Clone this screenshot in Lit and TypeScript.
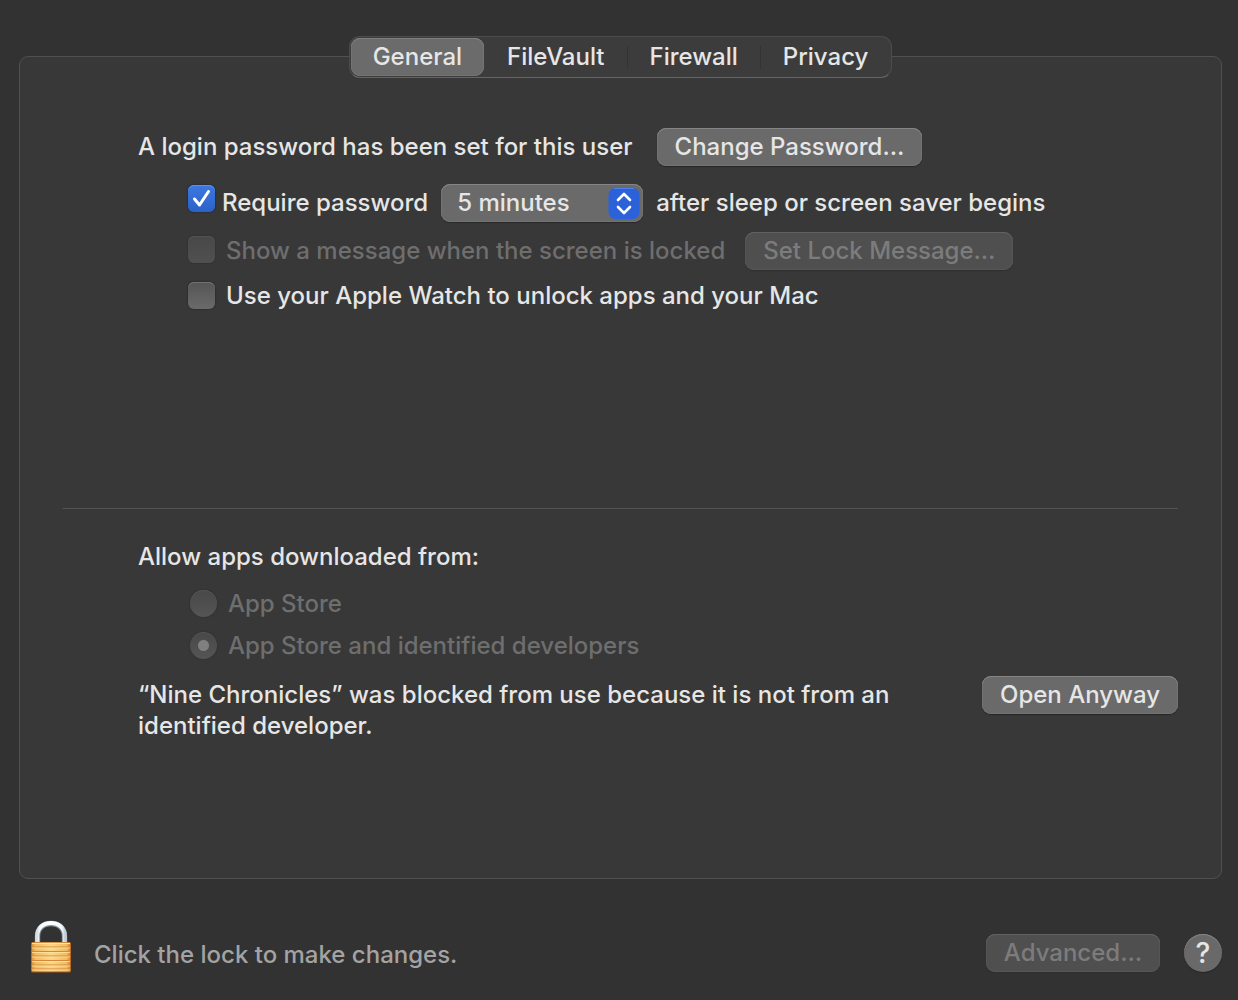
import { LitElement, html, css, svg } from "lit";
import { customElement, state } from "lit/decorators.js";
import { classMap } from "lit/directives/class-map.js";

const TABS = ["General", "FileVault", "Firewall", "Privacy"];

@customElement("app-root")
export class AppRoot extends LitElement {
  static styles = css`
    :host {
      display: block;
      font-family: Inter, "Liberation Sans", sans-serif;
      font-size: 24px;
      font-weight: 500;
      line-height: 31px;
      color: #e6e6e6;
      background: #323232;
    }
    * {
      box-sizing: border-box;
    }
    button,
    select {
      font: inherit;
      color: inherit;
      margin: 0;
    }
    .page {
      min-height: 100vh;
      display: flex;
      flex-direction: column;
      padding: 36px 16px 26px 19px;
    }
    .tabs {
      align-self: center;
      display: flex;
      align-items: center;
      height: 42px;
      margin-bottom: -22px;
      padding: 0 1px;
      z-index: 1;
      border: 1px solid #4c4c4c;
      border-bottom-color: #656565;
      border-radius: 11px;
      background: #3c3c3c;
    }
    .tab {
      height: 38px;
      padding: 0 22px 2px;
      border: 0;
      border-radius: 9px;
      background: none;
      display: flex;
      align-items: center;
    }
    .tab.selected {
      background: #6b6b6b;
      box-shadow: inset 0 1px 0 #7f7f7f, inset 0 0 0 1px #747474;
    }
    .rule {
      width: 1px;
      height: 23px;
      background: #333333;
    }
    .rule.clear {
      background: none;
    }
    .panel {
      flex: 1;
      border: 1px solid #505050;
      border-radius: 9px;
      background: #383838;
      padding: 71px 43px 0;
    }
    .login {
      min-height: 381px;
      padding-left: 75px;
      border-bottom: 1px solid #545454;
    }
    .row {
      display: flex;
      align-items: center;
      min-height: 38px;
    }
    .row.short {
      min-height: 31px;
    }
    .text,
    .row label {
      padding-bottom: 2px;
    }
    .password {
      gap: 24px;
      margin-bottom: 18px;
    }
    .options {
      display: flex;
      flex-direction: column;
      gap: 10px;
      padding-left: 50px;
    }
    .require {
      gap: 13px;
    }
    .message {
      gap: 20px;
    }
    .choice {
      display: flex;
      align-items: center;
      gap: 11px;
    }
    .tight {
      gap: 7px;
    }
    .off {
      color: #6e6e6e;
    }
    .mark {
      display: grid;
      width: 27px;
      height: 27px;
    }
    .mark.raised {
      margin-bottom: 10px;
    }
    .row .mark:not(.raised) {
      margin-bottom: 3px;
    }
    .mark > * {
      grid-area: 1 / 1;
      width: 100%;
      height: 100%;
      margin: 0;
    }
    .mark svg {
      pointer-events: none;
    }
    .box {
      appearance: none;
      border-radius: 6px;
      background: linear-gradient(#555555, #6a6a6a);
      box-shadow: inset 0 1px 0 #737373, 0 0 1px 1px #303030;
    }
    .box:checked {
      background: linear-gradient(#3b78e0, #2c62c8);
      box-shadow: inset 0 1px 0 #5a93ee, 0 0 1px 1px #2c3038;
    }
    .box:not(:checked) + svg {
      visibility: hidden;
    }
    .box:disabled {
      background: linear-gradient(#484848, #505050);
      box-shadow: inset 0 1px 0 #525252, 0 0 1px 1px #343434;
    }
    .dot {
      appearance: none;
      border-radius: 50%;
      background: linear-gradient(#484848, #555555);
      box-shadow: inset 0 1px 0 #555555, 0 0 1px 1px #343434;
    }
    .dot:checked {
      background: radial-gradient(circle, #808080 5px, transparent 6px),
        linear-gradient(#484848, #555555);
    }
    .push {
      height: 38px;
      padding: 0 18px 2px;
      border: 0;
      border-radius: 9px;
      background: #6a6a6a;
      box-shadow: inset 0 1px 0 #858585, inset 0 0 0 1px #737373,
        0 1px 1px #262626;
      display: flex;
      align-items: center;
      white-space: nowrap;
    }
    .push:disabled {
      color: #7c7c7c;
      background: #4f4f4f;
      box-shadow: inset 0 1px 0 #616161, inset 0 0 0 1px #565656,
        0 1px 1px #2f2f2f;
    }
    .popup {
      display: grid;
      width: 202px;
      height: 38px;
      align-items: center;
    }
    .popup > * {
      grid-area: 1 / 1;
    }
    .popup select {
      appearance: none;
      width: 100%;
      height: 100%;
      padding: 0 40px 2px 16px;
      border: 0;
      border-radius: 9px;
      background: #6a6a6a;
      box-shadow: inset 0 1px 0 #858585, inset 0 0 0 1px #737373,
        0 1px 1px #2a2a2a;
    }
    .popup svg {
      justify-self: end;
      width: 32px;
      height: 32px;
      margin-right: 3px;
      pointer-events: none;
    }
    .sources {
      padding: 32px 0 0 75px;
    }
    .radios {
      display: flex;
      flex-direction: column;
      gap: 11px;
      padding: 16px 0 0 52px;
    }
    .radios .choice {
      min-height: 31px;
    }
    .blocked {
      display: flex;
      align-items: flex-start;
      justify-content: space-between;
      gap: 40px;
      margin-top: 15px;
    }
    .blocked p {
      margin: 3px 0 0;
      max-width: 780px;
    }
    .footer {
      display: flex;
      align-items: center;
      padding-top: 41px;
    }
    .unlock {
      flex: 1;
      display: flex;
      align-items: center;
      gap: 21px;
      padding: 0 0 0 10px;
      border: 0;
      background: none;
      color: #a3a3a3;
      text-align: left;
    }
    .unlock svg {
      width: 44px;
      height: 54px;
    }
    .unlock span {
      padding-top: 14px;
    }
    .help {
      width: 38px;
      height: 38px;
      margin-left: 24px;
      padding: 0;
      border: 0;
      border-radius: 50%;
      background: #696969;
      box-shadow: inset 0 1px 0 #858585, 0 1px 1px #262626;
      font-size: 28px;
    }
    .actions {
      display: flex;
      align-items: center;
      padding-top: 12px;
    }
  `;

  @state() private tab = TABS[0];

  private padlock() {
    return svg`<svg viewBox="0 0 44 54" aria-hidden="true">
      <defs>
        <linearGradient id="steel" x1="0" x2="1" y1="0" y2="0">
          <stop offset="0" stop-color="#d5dde4" />
          <stop offset=".1" stop-color="#f8fafc" />
          <stop offset=".5" stop-color="#ffffff" />
          <stop offset=".9" stop-color="#f4f7fa" />
          <stop offset="1" stop-color="#c5ced6" />
        </linearGradient>
        <linearGradient id="brass" x1="0" x2="1" y1="0" y2="0">
          <stop offset="0" stop-color="#dd8f38" />
          <stop offset=".1" stop-color="#f3bb60" />
          <stop offset=".5" stop-color="#fbd688" />
          <stop offset=".9" stop-color="#f3bb60" />
          <stop offset="1" stop-color="#d38230" />
        </linearGradient>
      </defs>
      <path d="M8.500 23V16.500C8.500 8.500 14 3.500 22 3.500S35.500 8.500 35.500 16.500V23" fill="none" stroke="#84919b" stroke-width="5.400" />
      <path d="M8.200 23V16C8.200 8 14 3 22 3S35.800 8 35.800 16V23" fill="none" stroke="url(#steel)" stroke-width="4.200" />
      <rect x="2" y="22" width="40" height="30.500" rx="1.500" fill="#a95716" />
      <rect x="2.600" y="22.600" width="38.800" height="29" rx="1" fill="url(#brass)" />
      <path d="M3 23.500H41" stroke="#ffe7a6" stroke-width="1" />
      ${[27, 31.5, 36, 40.5, 45, 49].map(
        (y) => svg`<path d="M2.500 ${y}H41.500" stroke="#cf8a3a" stroke-width="1" /><path d="M3 ${y + 1}H41" stroke="#ffe3a0" stroke-width=".8" />`
      )}
    </svg>`;
  }

  private tick() {
    return svg`<svg viewBox="0 0 27 27" aria-hidden="true">
      <path d="M6.500 14L11.500 20L20.500 6.500" fill="none" stroke="#fff" stroke-width="3" stroke-linecap="round" stroke-linejoin="round" />
    </svg>`;
  }

  render() {
    return html`
      <div class="page">
        <div class="tabs" role="tablist">
          ${TABS.map(
            (name, i) => html`
              ${i
                ? html`<span
                    class=${classMap({
                      rule: true,
                      clear: this.tab === name || this.tab === TABS[i - 1],
                    })}
                  ></span>`
                : ""}
              <button
                role="tab"
                aria-selected=${this.tab === name}
                class=${classMap({ tab: true, selected: this.tab === name })}
                @click=${() => (this.tab = name)}
              >${name}</button>
            `
          )}
        </div>
        <main class="panel">
          <section class="login">
            <div class="row password">
              <span class="text">A login password has been set for this user</span>
              <button class="push">Change Password…</button>
            </div>
            <div class="options">
              <div class="row require">
                <div class="choice tight">
                  <span class="mark raised">
                    <input class="box" id="require" type="checkbox" checked />
                    ${this.tick()}
                  </span>
                  <label for="require">Require password</label>
                </div>
                <div class="popup">
                  <select id="delay">
                    <option>5 minutes</option>
                  </select>
                  <svg viewBox="0 0 32 32" aria-hidden="true">
                    <rect x="0.500" y="1" width="31" height="31" rx="7" fill="#2b62d9" />
                    <path d="M6 1.500H26" stroke="#4c80ea" />
                    <path d="M10 13L16 7L22 13M10 20L16 26L22 20" fill="none" stroke="#fff" stroke-width="2.600" stroke-linecap="round" stroke-linejoin="round" />
                  </svg>
                </div>
                <label for="delay">after sleep or screen saver begins</label>
              </div>
              <div class="row message">
                <div class="choice off">
                  <span class="mark">
                    <input class="box" id="message" type="checkbox" disabled />
                  </span>
                  <label for="message">Show a message when the screen is locked</label>
                </div>
                <button class="push" disabled>Set Lock Message…</button>
              </div>
              <div class="row short">
                <div class="choice">
                  <span class="mark">
                    <input class="box" id="watch" type="checkbox" />
                    ${this.tick()}
                  </span>
                  <label for="watch">Use your Apple Watch to unlock apps and your Mac</label>
                </div>
              </div>
            </div>
          </section>
          <section class="sources">
            <div id="allow">Allow apps downloaded from:</div>
            <div class="radios off" role="radiogroup" aria-labelledby="allow">
              <div class="choice">
                <span class="mark"><input class="dot" id="store" type="radio" name="source" disabled /></span>
                <label for="store">App Store</label>
              </div>
              <div class="choice">
                <span class="mark"><input class="dot" id="identified" type="radio" name="source" checked disabled /></span>
                <label for="identified">App Store and identified developers</label>
              </div>
            </div>
            <div class="blocked">
              <p>“Nine Chronicles” was blocked from use because it is not from an identified developer.</p>
              <button class="push">Open Anyway</button>
            </div>
          </section>
        </main>
        <footer class="footer">
          <button class="unlock">
            ${this.padlock()}
            <span>Click the lock to make changes.</span>
          </button>
          <div class="actions">
            <button class="push" disabled>Advanced…</button>
            <button class="help">?</button>
          </div>
        </footer>
      </div>
    `;
  }
}
